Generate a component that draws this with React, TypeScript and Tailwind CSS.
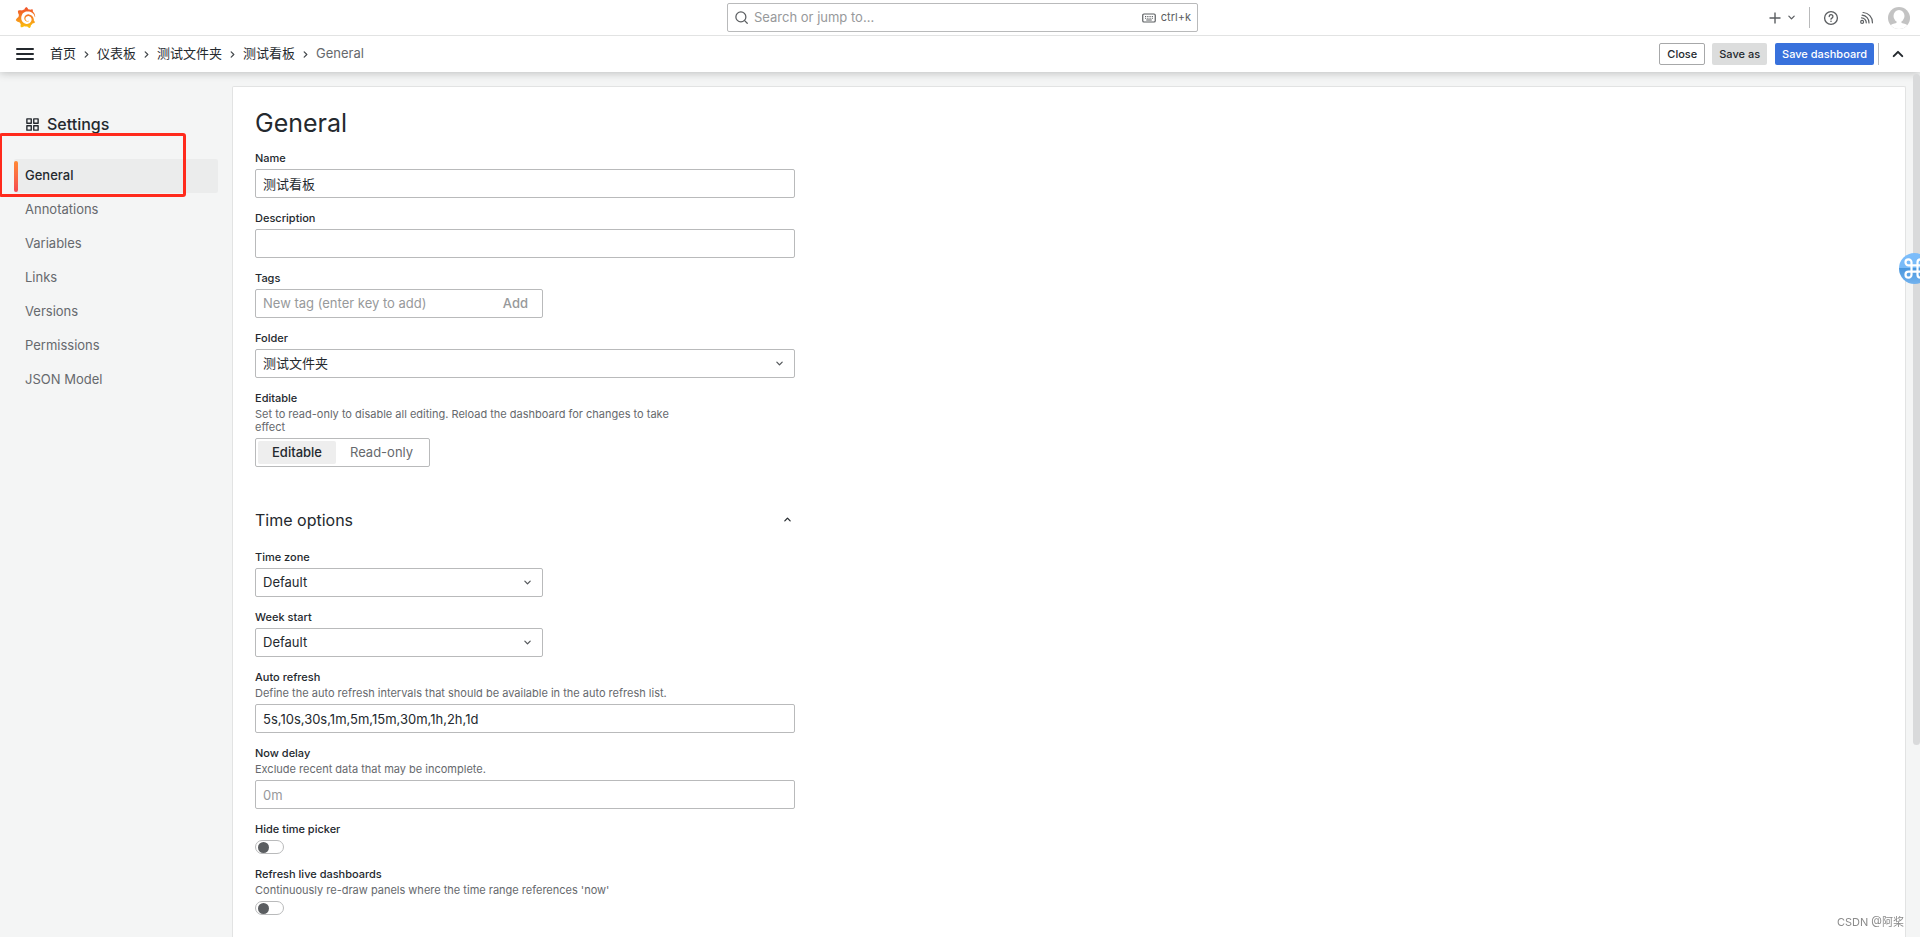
import { useState, type ReactNode } from "react";
import { SiGrafana } from "react-icons/si";

const ANGLE_DOWN =
  "M17,9.17a1,1,0,0,0-1.41,0L12,12.71,8.46,9.17a1,1,0,0,0-1.41,0,1,1,0,0,0,0,1.42l4.24,4.24a1,1,0,0,0,1.42,0L17,10.59A1,1,0,0,0,17,9.17Z";

function Angle({ className }: { className: string }) {
  return (
    <svg viewBox="0 0 24 24" fill="currentColor" className={className} aria-hidden="true">
      <path d={ANGLE_DOWN} />
    </svg>
  );
}

function Logo() {
  return (
    <>
      <svg className="absolute size-0" aria-hidden="true">
        <defs>
          <linearGradient id="logo-fill" x1="0" y1="0" x2="0" y2="1">
            <stop offset="0" stopColor="#f1502b" />
            <stop offset="0.5" stopColor="#f58220" />
            <stop offset="1" stopColor="#fcc60b" />
          </linearGradient>
        </defs>
      </svg>
      <SiGrafana fill="url(#logo-fill)" className="size-[21px]" />
    </>
  );
}

function SearchIcon() {
  return (
    <svg viewBox="0 0 24 24" fill="none" stroke="currentColor" strokeWidth="2" strokeLinecap="round" className="size-[15px]" aria-hidden="true">
      <circle cx="11" cy="11" r="8" />
      <path d="M17 17l4.2 4.2" />
    </svg>
  );
}

function KeyboardIcon() {
  return (
    <svg viewBox="0 0 28 20" fill="none" stroke="currentColor" strokeWidth="2.4" className="h-[10px] w-[14px]" aria-hidden="true">
      <rect x="1.5" y="2" width="25" height="16" rx="2.5" />
      <path d="M6 7h2.4M10.500 7h2.400M15 7h2.400M19.500 7h2.400M6 10.500h2.400M10.500 10.500h2.400M15 10.500h2.400M19.500 10.500h2.400M8.500 14h11" strokeWidth="2" />
    </svg>
  );
}

function HelpIcon() {
  return (
    <svg viewBox="0 0 24 24" fill="none" stroke="currentColor" strokeWidth="2" strokeLinecap="round" className="size-4" aria-hidden="true">
      <circle cx="12" cy="12" r="9.6" />
      <path d="M9.300 9.700a2.800 2.800 0 1 1 4.200 2.400c-.9.5-1.500.9-1.500 1.700" />
      <path d="M12 16.800v.1" strokeWidth="2.400" />
    </svg>
  );
}

function NewsIcon() {
  return (
    <svg viewBox="0 0 24 24" fill="none" stroke="currentColor" strokeWidth="1.9" strokeLinecap="round" className="size-[15px]" aria-hidden="true">
      <circle cx="5" cy="19" r="2.300" />
      <path d="M4 12.500a7.600 7.600 0 0 1 7.600 8M5 8.300a11.800 11.800 0 0 1 11 12.400M6.500 4a15.800 15.800 0 0 1 15 16.500" />
    </svg>
  );
}

function Avatar() {
  return (
    <svg viewBox="0 0 44 44" className="size-[22px]" aria-hidden="true">
      <defs>
        <clipPath id="avatar-clip">
          <circle cx="22" cy="22" r="22" />
        </clipPath>
      </defs>
      <g clipPath="url(#avatar-clip)">
        <rect width="44" height="44" fill="#c3c3c3" />
        <ellipse cx="22" cy="18" rx="11" ry="12" fill="#fff" />
        <path d="M17 26h10v6c6 1 10 2.500 13 5v8H4v-8c3-2.500 7-4 13-5z" fill="#fff" />
      </g>
    </svg>
  );
}

function AppsIcon() {
  return (
    <svg viewBox="0 0 24 24" fill="none" stroke="currentColor" strokeWidth="2.2" strokeLinejoin="round" className="size-[15px]" aria-hidden="true">
      <rect x="3" y="3" width="7" height="7" />
      <rect x="14" y="3" width="7" height="7" />
      <rect x="3" y="14" width="7" height="7" />
      <rect x="14" y="14" width="7" height="7" />
    </svg>
  );
}

function CommandBadge() {
  return (
    <svg viewBox="0 0 31 31" className="size-[31px]" aria-hidden="true">
      <defs>
        <linearGradient id="badge-fill" x1="0" y1="0" x2="0" y2="1">
          <stop offset="0" stopColor="#7cbdfb" />
          <stop offset="0.5" stopColor="#78baf7" />
          <stop offset="0.5" stopColor="#4a97de" />
          <stop offset="1" stopColor="#72b2ee" />
        </linearGradient>
      </defs>
      <circle cx="15.500" cy="15.500" r="15.500" fill="url(#badge-fill)" />
      <path
        d="M12.500 9.300a3 3 0 1 0-3 3h12a3 3 0 1 0-3-3v12.400a3 3 0 1 0 3-3h-12a3 3 0 1 0 3 3z"
        fill="none"
        stroke="#fff"
        strokeWidth="2.200"
      />
    </svg>
  );
}

const crumbs = ["首页", "仪表板", "测试文件夹", "测试看板"];
const sections = ["General", "Annotations", "Variables", "Links", "Versions", "Permissions", "JSON Model"];

const box =
  "h-[29px] w-full rounded-[2px] border border-[#b9babb] bg-white px-[7px] text-[13px] text-[#24292e] placeholder:text-[#97999b] outline-none focus:border-[#3871dc]";

function Field({ id, label, hint, children }: { id: string; label: string; hint?: string; children: ReactNode }) {
  return (
    <div className="flex flex-col items-start gap-1">
      <div className="flex w-full max-w-[432px] flex-col gap-[3px] text-[11px] leading-[13px]">
        <label htmlFor={id} className="font-medium">
          {label}
        </label>
        {hint && <p className="text-[#66696d]">{hint}</p>}
      </div>
      {children}
    </div>
  );
}

function Select({ id, value }: { id: string; value: string }) {
  return (
    <div className="relative w-full">
      <select id={id} className={`${box} appearance-none`}>
        <option>{value}</option>
      </select>
      <Angle className="pointer-events-none absolute top-[7px] right-2 size-[15px] text-[#55585c]" />
    </div>
  );
}

function Switch({ id }: { id: string }) {
  return (
    <input
      id={id}
      type="checkbox"
      role="switch"
      className="flex h-[14px] w-[29px] appearance-none items-center rounded-full border border-[#b9babb] bg-white px-[2px] before:size-[11px] before:rounded-full before:bg-[#5b5e61] checked:justify-end checked:bg-[#3871dc] checked:before:bg-white"
    />
  );
}

export default function App() {
  const [mode, setMode] = useState("Editable");
  const [open, setOpen] = useState(true);

  return (
    <div className="flex min-h-screen flex-col bg-[#f4f5f5] font-['Inter','Noto_Sans_CJK_SC',sans-serif] text-[13px] text-[#24292e]">
      <header className="relative bg-white shadow-[0_1px_8px_rgba(24,26,27,0.25)]">
        <div className="grid h-9 grid-cols-[1fr_2fr_1fr] items-center border-b border-[#e2e3e3] pr-[10px] pl-[15px]">
          <a href="#home" aria-label="Home" className="w-fit">
            <Logo />
          </a>
          <div className="mx-auto flex h-[29px] w-full max-w-[471px] items-center gap-[5px] rounded-[2px] border border-[#b9babb] px-[6px] text-[#5b5e61]">
            <SearchIcon />
            <input
              aria-label="Search or jump to"
              placeholder="Search or jump to..."
              className="min-w-0 flex-1 text-[13px] outline-none placeholder:text-[#97999b]"
            />
            <KeyboardIcon />
            <span className="text-[11px]">ctrl+k</span>
          </div>
          <div className="flex items-center justify-end text-[#5b5e61]">
            <button type="button" aria-label="New" className="flex items-center gap-[3px]">
              <svg viewBox="0 0 12 12" className="size-3" stroke="currentColor" strokeWidth="1.400" aria-hidden="true">
                <path d="M6 .5v11M.5 6h11" />
              </svg>
              <Angle className="size-[15px]" />
            </button>
            <span className="mr-[13px] ml-[10px] h-[21px] w-px bg-[#b9babb]" />
            <button type="button" aria-label="Help" className="mr-5">
              <HelpIcon />
            </button>
            <button type="button" aria-label="News" className="mr-[14px]">
              <NewsIcon />
            </button>
            <button type="button" aria-label="Profile">
              <Avatar />
            </button>
          </div>
        </div>

        <div className="flex h-9 items-center justify-between pr-[10px] pl-4">
          <div className="flex items-center gap-4">
            <button type="button" aria-label="Menu">
              <svg viewBox="0 0 18 14" className="h-[14px] w-[18px]" stroke="currentColor" strokeWidth="2" strokeLinecap="round" aria-hidden="true">
                <path d="M1 2h16M1 7h16M1 12h16" />
              </svg>
            </button>
            <nav aria-label="Breadcrumbs" className="flex items-center gap-[3px]">
              {crumbs.map((c) => (
                <span key={c} className="flex items-center gap-[3px]">
                  <a href="#crumb">{c}</a>
                  <Angle className="size-[15px] -rotate-90 text-[#45494d]" />
                </span>
              ))}
              <span className="text-[#66696d]">General</span>
            </nav>
          </div>
          <div className="flex items-center text-[11px] font-medium">
            <button type="button" className="mr-[7px] h-[22px] rounded-[2px] border border-[#a7a8a9] px-[7px]">
              Close
            </button>
            <button type="button" className="mr-2 h-[22px] rounded-[2px] bg-[#dcdddd] px-[7px]">
              Save as
            </button>
            <button type="button" className="h-[22px] rounded-[2px] bg-[#3871dc] px-[7px] text-white">
              Save dashboard
            </button>
            <span className="mr-[7px] ml-1 h-[22px] w-px bg-[#b9babb]" />
            <button type="button" aria-label="Hide top bar">
              <Angle className="size-6 rotate-180" />
            </button>
          </div>
        </div>
      </header>

      <div className="flex flex-1 pt-[14px] pr-[14px]">
        <aside className="w-[232px] shrink-0 pr-[14px] pl-[14px]">
          <h2 className="flex h-[76px] items-center gap-[7px] pl-[11px] text-[16px] font-medium">
            <AppsIcon />
            Settings
          </h2>
          <nav aria-label="Settings" className="-mt-[3px]">
            {sections.map((s, i) => (
              <a
                key={s}
                href={`#${s}`}
                className={
                  i === 0
                    ? "flex h-[34px] items-center gap-[7px] rounded-[2px] bg-[#ebecec] font-medium"
                    : "flex h-[34px] items-center pl-[11px] text-[#66696d]"
                }
              >
                {i === 0 && <span className="h-[31px] w-1 rounded-[2px] bg-linear-to-b from-[#ff8833] to-[#f5484f]" />}
                {s}
              </a>
            ))}
          </nav>
        </aside>

        <main className="flex-1 rounded-t-[2px] border border-b-0 border-[#e2e3e3] bg-white px-[22px] pt-[21px] pb-5">
          <div className="flex max-w-[540px] flex-col">
            <h1 className="mb-[13px] text-[25px] leading-[31px]">General</h1>
            <form className="flex flex-col gap-[14px]" onSubmit={(e) => e.preventDefault()}>
              <Field id="name" label="Name">
                <input id="name" defaultValue="测试看板" className={box} />
              </Field>
              <Field id="description" label="Description">
                <input id="description" className={box} />
              </Field>
              <Field id="tags" label="Tags">
                <div className="flex h-[29px] w-full max-w-[288px] items-center rounded-[2px] border border-[#b9babb] pr-[14px] pl-[7px]">
                  <input
                    id="tags"
                    placeholder="New tag (enter key to add)"
                    className="min-w-0 flex-1 outline-none placeholder:text-[#97999b]"
                  />
                  <button type="button" className="font-medium text-[#97999b]">
                    Add
                  </button>
                </div>
              </Field>
              <Field id="folder" label="Folder">
                <Select id="folder" value="测试文件夹" />
              </Field>
              <Field
                id="mode-Editable"
                label="Editable"
                hint="Set to read-only to disable all editing. Reload the dashboard for changes to take effect"
              >
                <div className="flex h-[29px] rounded-[2px] border border-[#b9babb] p-[2px]">
                  {["Editable", "Read-only"].map((m) => (
                    <label
                      key={m}
                      className="relative flex items-center rounded-[2px] px-[14px] text-[#66696d] has-checked:bg-[#eeeeee] has-checked:font-medium has-checked:text-[#24292e]"
                    >
                      <input
                        id={`mode-${m}`}
                        type="radio"
                        name="mode"
                        checked={mode === m}
                        onChange={() => setMode(m)}
                        className="sr-only"
                      />
                      {m}
                    </label>
                  ))}
                </div>
              </Field>

              <button
                type="button"
                aria-expanded={open}
                onClick={() => setOpen(!open)}
                className="mt-7 mb-[7px] flex h-[21px] items-center justify-between text-[16px]"
              >
                Time options
                <Angle className={open ? "size-[15px] rotate-180" : "size-[15px]"} />
              </button>

              {open && (
                <>
                  <Field id="timezone" label="Time zone">
                    <div className="w-full max-w-[288px]">
                      <Select id="timezone" value="Default" />
                    </div>
                  </Field>
                  <Field id="week" label="Week start">
                    <div className="w-full max-w-[288px]">
                      <Select id="week" value="Default" />
                    </div>
                  </Field>
                  <Field
                    id="refresh"
                    label="Auto refresh"
                    hint="Define the auto refresh intervals that should be available in the auto refresh list."
                  >
                    <input id="refresh" defaultValue="5s,10s,30s,1m,5m,15m,30m,1h,2h,1d" className={box} />
                  </Field>
                  <Field id="delay" label="Now delay" hint="Exclude recent data that may be incomplete.">
                    <input id="delay" placeholder="0m" className={box} />
                  </Field>
                  <Field id="hide-picker" label="Hide time picker">
                    <Switch id="hide-picker" />
                  </Field>
                  <Field
                    id="live"
                    label="Refresh live dashboards"
                    hint="Continuously re-draw panels where the time range references 'now'"
                  >
                    <Switch id="live" />
                  </Field>
                </>
              )}
            </form>
          </div>
        </main>
      </div>

      <div className="pointer-events-none absolute top-[133px] -left-px h-16 w-[187px] rounded-[3px] border-[3px] border-[#ff2a1c]" />
      <div className="fixed top-[74px] right-0 h-[671px] w-[7px] rounded-full bg-[#d9dadb]" />
      <div className="fixed top-[253px] -right-[10px]">
        <CommandBadge />
      </div>
      <div className="fixed right-4 bottom-[7px] text-[11px] text-[#8b8b8b]">CSDN @阿桨</div>
    </div>
  );
}
